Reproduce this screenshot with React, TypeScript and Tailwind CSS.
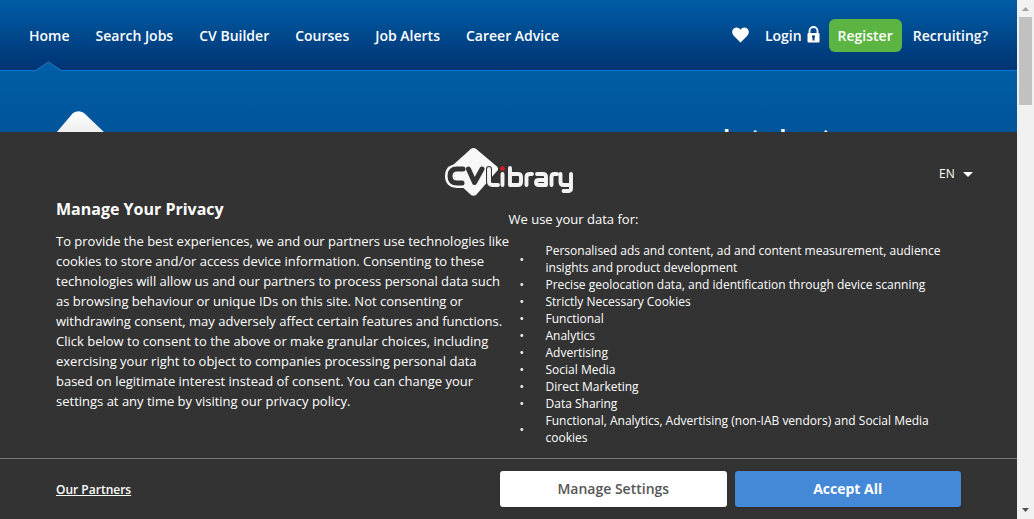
import React from "react";

const links = ["Home", "Search Jobs", "CV Builder", "Courses", "Job Alerts", "Career Advice"];

const purposes = [
  "Personalised ads and content, ad and content measurement, audience insights and product development",
  "Precise geolocation data, and identification through device scanning",
  "Strictly Necessary Cookies",
  "Functional",
  "Analytics",
  "Advertising",
  "Social Media",
  "Direct Marketing",
  "Data Sharing",
  "Functional, Analytics, Advertising (non-IAB vendors) and Social Media cookies",
];

function Logo() {
  return (
    <svg width="128" height="48" viewBox="0 0 128 48" role="img" aria-label="CV Library" fill="none">
      <path d="M25.500 1.200Q28.500 -1 31.500 1.200L52 18.500Q54 20.500 52.500 22.500L31.500 46.500Q28.500 49 25.500 46.500L12 34L8 17Z" fill="#f8f8f8" />
      <path d="M20 16H11.500Q0 17 0 28T11.500 40H21L24 30Z" fill="#f8f8f8" />
      <g strokeLinecap="round" strokeLinejoin="round">
        <path d="M18 21H12Q5 21 5 28T12 35H17M23.500 21L29.500 34.500L37 21" stroke="#333" strokeWidth="5" />
        <path d="M44 21V33.500Q44 37 47.500 37H53M57.500 26V37M65 20V37H73Q76 37 76 34V29Q76 26 73 26H65M81.500 37V29Q81.500 26 85 26H87M92 26H98Q101 26 101 29V37H94Q91 37 91 34.500T94 32H101M106.500 37V29Q106.500 26 109.500 26H112M115.500 26V34Q115.500 37 118.500 37H126M126 26V40.500Q126 43 123 43H118.500" stroke="#333" strokeWidth="6" />
        <path d="M44 21V33.500Q44 37 47.500 37H53M57.500 26V37M65 20V37H73Q76 37 76 34V29Q76 26 73 26H65M81.500 37V29Q81.500 26 85 26H87M92 26H98Q101 26 101 29V37H94Q91 37 91 34.500T94 32H101M106.500 37V29Q106.500 26 109.500 26H112M115.500 26V34Q115.500 37 118.500 37H126M126 26V40.500Q126 43 123 43H118.500" stroke="#f3f3f3" strokeWidth="3.900" />
      </g>
      <circle cx="57.500" cy="20.500" r="2.300" fill="#e31b23" />
    </svg>
  );
}

function Header() {
  return (
    <header className="border-b border-[#0078e0] bg-linear-to-b from-[#005da6] to-[#003473]">
      <div className="flex h-[70px] items-center justify-between pl-[29px] pr-[29px] text-sm font-semibold">
        <nav className="flex h-full items-center gap-[26px]">
          {links.map((label, i) => (
            <a key={label} href="#" className="relative flex h-full items-center pt-0.5">
              {label}
              {i === 0 && (
                <svg className="absolute -bottom-px left-[6px]" width="27" height="10" viewBox="0 0 27 10">
                  <path d="M0 10L13.500 1L27 10" fill="#005da6" stroke="#2b78c8" />
                </svg>
              )}
            </a>
          ))}
        </nav>
        <div className="flex items-center">
          <a href="#" aria-label="Saved jobs" className="mr-4">
            <svg width="17" height="16" viewBox="0 0 17 16" fill="#fff">
              <path d="M8.500 15.500L1.500 8.500C-.5 6 0 3 1.800 1.400C4 -.3 7 .3 8.500 2.700C10 .3 13 -.3 15.200 1.400C17 3 17.500 6 15.500 8.500Z" />
            </svg>
          </a>
          <a href="#" className="mr-2 flex items-center gap-1 pt-0.5">
            Login
            <svg className="mb-1" width="15" height="17" viewBox="0 0 15 17">
              <path d="M3.500 8V5a4 4 0 0 1 8 0V8" fill="none" stroke="#fff" strokeWidth="1.800" />
              <rect x="1.500" y="7" width="12" height="9.500" rx="1" fill="#fff" />
              <path d="M6 9.500h3v2h-.5v3h-2v-3h-.5z" fill="#044078" />
            </svg>
          </a>
          <a href="#" className="mr-[11px] flex h-[33px] items-center rounded-md bg-[#5cb442] px-[9px] pt-0.5">Register</a>
          <a href="#" className="pt-0.5">Recruiting?</a>
        </div>
      </div>
    </header>
  );
}

function Hero() {
  return (
    <main className="min-h-0 flex-1 overflow-hidden bg-linear-to-b from-[#005da3] to-[#00549a]">
      <div className="flex justify-between pl-14 pr-[186px]">
        <svg className="mt-10" width="50" height="50" viewBox="0 0 50 50">
          <defs>
            <linearGradient id="hero-mark" x1="0" y1="0" x2="0" y2="1">
              <stop offset="0" stopColor="#fff" />
              <stop offset="1" stopColor="#d8d8d8" />
            </linearGradient>
          </defs>
          <path d="M17 2Q22.500 -1.500 28 2L49 22V50H0V22Z" fill="url(#hero-mark)" />
        </svg>
        <p className="mt-[49px] text-[22px] leading-8 font-bold">what about</p>
      </div>
    </main>
  );
}

function Privacy() {
  return (
    <section aria-labelledby="privacy-title" className="shrink-0 bg-[#333] text-xs">
      <div className="relative flex h-[62px] justify-center pt-4">
        <Logo />
        <div className="absolute right-[44px] top-[34px] flex items-center">
          <select aria-label="Language" className="appearance-none bg-transparent pr-[18px] text-xs leading-4">
            <option>EN</option>
          </select>
          <svg className="pointer-events-none absolute right-0" width="10" height="5" viewBox="0 0 10 5">
            <path d="M0 0H10L5 5Z" fill="#fff" />
          </svg>
        </div>
      </div>
      <div className="flex h-[264px] px-14">
        <div className="w-1/2 pt-[3px]">
          <h1 id="privacy-title" className="text-base leading-6 font-bold">Manage Your Privacy</h1>
          <p className="mt-[10px] text-[13px] leading-5 whitespace-nowrap">
            To provide the best experiences, we and our partners use technologies like<br />
            cookies to store and/or access device information. Consenting to these<br />
            technologies will allow us and our partners to process personal data such<br />
            as browsing behaviour or unique IDs on this site. Not consenting or<br />
            withdrawing consent, may adversely affect certain features and functions.<br />
            Click below to consent to the above or make granular choices, including<br />
            exercising your right to object to companies processing personal data<br />
            based on legitimate interest instead of consent. You can change your<br />
            settings at any time by visiting our privacy policy.
          </p>
        </div>
        <div className="w-1/2 pt-[15px]">
          <p className="text-[13px] leading-5">We use your data for:</p>
          <ul className="mt-[13px] leading-[17px]">
            {purposes.map((p) => (
              <li key={p} className="flex items-center">
                <span className="w-[37px] shrink-0 pl-[11px]">•</span>
                <span className="max-w-[400px]">{p}</span>
              </li>
            ))}
          </ul>
        </div>
      </div>
      <footer className="flex h-[61px] items-center border-t border-[#777] px-14">
        <div className="flex-1 pt-0.5">
          <a href="#" className="font-semibold underline">Our Partners</a>
        </div>
        <div className="flex w-[461px] gap-2 text-sm">
          <button className="h-9 flex-1 rounded-[3px] bg-white font-semibold text-[#555] shadow">Manage Settings</button>
          <button className="h-9 flex-1 rounded-[3px] bg-[#4488d8] font-bold shadow">Accept All</button>
        </div>
      </footer>
    </section>
  );
}

export default function App() {
  return (
    <div className="flex h-screen overflow-hidden font-['Open_Sans','Noto_Sans',sans-serif] text-white">
      <div className="flex min-w-0 flex-1 flex-col">
        <Header />
        <Hero />
        <Privacy />
      </div>
      <div aria-hidden="true" className="flex w-[17px] flex-col items-center justify-between bg-[#f1f1f1] py-[7px]">
        <div className="flex flex-col items-center gap-[6px]">
          <svg width="7" height="4" viewBox="0 0 7 4"><path d="M0 4L3.500 0L7 4Z" fill="#a3a3a3" /></svg>
          <div className="h-[88px] w-[13px] bg-[#c1c1c1]" />
        </div>
        <svg width="7" height="4" viewBox="0 0 7 4"><path d="M0 0L3.500 4L7 0Z" fill="#505050" /></svg>
      </div>
    </div>
  );
}
